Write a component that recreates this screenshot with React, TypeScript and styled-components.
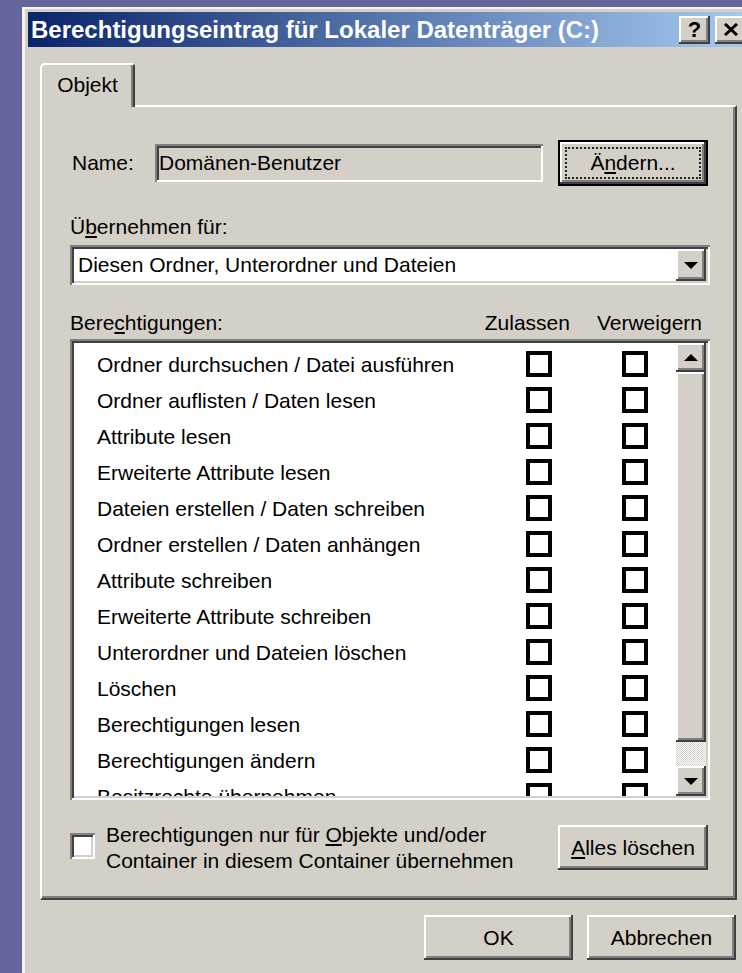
import React from "react";
import styled, { createGlobalStyle } from "styled-components";

const face = "#d4d0c8";

const raised = `
  box-shadow: inset -2px -2px #404040, inset 2px 2px #ffffff, inset -4px -4px #808080;
`;

const sunken = `
  box-shadow: inset 2px 2px #808080, inset -2px -2px #ffffff, inset 4px 4px #404040,
    inset -4px -4px ${face};
`;

const GlobalStyle = createGlobalStyle`
  html, body {
    margin: 0;
    padding: 0;
  }
  body {
    background: #66669c;
    overflow: hidden;
    font-family: "Liberation Sans", Arial, sans-serif;
    font-size: 21px;
    color: #000;
  }
`;

const Desktop = styled.div`
  width: 742px;
  height: 973px;
  overflow: hidden;
  box-sizing: border-box;
  padding: 7px 0 0 22px;
`;

const Window = styled.div`
  width: 734px;
  height: 1010px;
  box-sizing: border-box;
  background: ${face};
  border-top: 2px solid #f4f3ef;
  border-left: 3px solid #f4f3ef;
  padding: 3px 6px 0 3px;
  display: flex;
  flex-direction: column;
`;

const TitleBar = styled.div`
  height: 35px;
  display: flex;
  align-items: center;
  padding: 0 4px 0 3px;
  background: linear-gradient(to right, #0a246a, #a6caf0);
`;

const Title = styled.div`
  flex: 1;
  color: #fff;
  font-weight: bold;
  font-size: 24px;
  white-space: nowrap;
`;

const CaptionButton = styled.div`
  width: 31px;
  height: 28px;
  margin-left: 5px;
  background: ${face};
  ${raised}
  display: flex;
  align-items: center;
  justify-content: center;
  font-weight: bold;
  font-size: 22px;
  line-height: 1;
`;

const Body = styled.div`
  flex: 1;
  display: flex;
  flex-direction: column;
  padding: 16px 13px 0 12px;
`;

const Tab = styled.div`
  align-self: flex-start;
  width: 95px;
  height: 44px;
  box-sizing: border-box;
  margin-bottom: -2px;
  position: relative;
  z-index: 1;
  background: ${face};
  border-top: 2px solid #fff;
  border-left: 2px solid #fff;
  border-right: 2px solid #404040;
  border-radius: 5px 4px 0 0;
  box-shadow: inset -2px 0 #808080;
  display: flex;
  align-items: center;
  justify-content: center;
  padding-bottom: 2px;
`;

const Panel = styled.div`
  height: 795px;
  box-sizing: border-box;
  border-top: 2px solid #fff;
  border-left: 2px solid #fff;
  border-right: 2px solid #404040;
  border-bottom: 2px solid #404040;
  box-shadow: inset -2px -2px #808080;
  padding: 33px 25px 0 28px;
  display: flex;
  flex-direction: column;
`;

const NameRow = styled.div`
  height: 46px;
  display: flex;
  align-items: center;
`;

const NameLabel = styled.div`
  width: 85px;
  padding-left: 2px;
  box-sizing: border-box;
`;

const ReadOnlyField = styled.div`
  flex: 1;
  height: 38px;
  margin-right: 15px;
  background: ${face};
  ${sunken}
  display: flex;
  align-items: center;
  padding-left: 4px;
`;

const PushButton = styled.div<{ $default?: boolean; $width?: number }>`
  width: ${(p) => p.$width ?? 150}px;
  height: ${(p) => (p.$default ? 46 : 45)}px;
  box-sizing: border-box;
  background: ${face};
  border: ${(p) => (p.$default ? "2px solid #000" : "none")};
  ${raised}
  display: flex;
  align-items: center;
  justify-content: center;
  padding: ${(p) => (p.$default ? "5px" : "0")};
  white-space: nowrap;
`;

const FocusRing = styled.span`
  flex: 1;
  align-self: stretch;
  display: flex;
  align-items: center;
  justify-content: center;
  border: 2px dotted #222;
`;

const FieldLabel = styled.div`
  margin-top: 29px;
  line-height: 24px;
`;

const ComboBox = styled.div`
  height: 40px;
  margin-top: 6px;
  box-sizing: border-box;
  background: #fff;
  ${sunken}
  display: flex;
  align-items: center;
  padding: 4px;
`;

const ComboText = styled.div`
  flex: 1;
  padding-left: 4px;
`;

const ArrowButton = styled.div<{ $height?: number }>`
  width: 30px;
  height: ${(p) => p.$height ?? 32}px;
  flex-shrink: 0;
  background: ${face};
  ${raised}
  display: flex;
  align-items: center;
  justify-content: center;
`;

const ListHeader = styled.div`
  margin-top: 26px;
  height: 24px;
  line-height: 24px;
  display: flex;
  gap: 27px;
  padding-right: 8px;
`;

const HeaderLabel = styled.div`
  flex: 1;
`;

const ListBox = styled.div`
  margin-top: 4px;
  height: 461px;
  box-sizing: border-box;
  background: #fff;
  ${sunken}
  display: flex;
  padding: 4px;
`;

const Rows = styled.div`
  flex: 1;
  overflow: hidden;
  padding: 4px 28px 0 23px;
`;

const Row = styled.div`
  height: 36px;
  display: grid;
  grid-template-columns: 1fr 26px 26px;
  column-gap: 70px;
  align-items: center;
  white-space: nowrap;
`;

const Check = styled.div`
  width: 26px;
  height: 26px;
  box-sizing: border-box;
  border: 4px solid #000;
  background: #fff;
  margin-top: -2px;
`;

const ScrollBar = styled.div`
  width: 30px;
  display: flex;
  flex-direction: column;
`;

const Thumb = styled.div`
  height: 370px;
  background: ${face};
  ${raised}
`;

const Track = styled.div`
  flex: 1;
  background-color: ${face};
  background-image: repeating-conic-gradient(#ffffff 0 25%, ${face} 0 50%);
  background-size: 2px 2px;
`;

const OptionRow = styled.div`
  margin-top: 25px;
  height: 45px;
  display: flex;
  align-items: center;
`;

const SmallCheck = styled.div`
  width: 25px;
  height: 26px;
  flex-shrink: 0;
  background: #fff;
  ${sunken}
  margin: 0 11px 4px 0;
`;

const OptionText = styled.div`
  flex: 1;
  line-height: 26px;
`;

const DialogButtons = styled.div`
  margin-top: 15px;
  display: flex;
  justify-content: flex-end;
  gap: 14px;
  padding-right: 1px;
`;

const Triangle: React.FC<{ up?: boolean }> = ({ up }) => (
  <svg width="14" height="7" viewBox="0 0 14 7">
    <polygon points={up ? "7,0 14,7 0,7" : "0,0 14,0 7,7"} fill="#000" />
  </svg>
);

const permissions = [
  "Ordner durchsuchen / Datei ausführen",
  "Ordner auflisten / Daten lesen",
  "Attribute lesen",
  "Erweiterte Attribute lesen",
  "Dateien erstellen / Daten schreiben",
  "Ordner erstellen / Daten anhängen",
  "Attribute schreiben",
  "Erweiterte Attribute schreiben",
  "Unterordner und Dateien löschen",
  "Löschen",
  "Berechtigungen lesen",
  "Berechtigungen ändern",
  "Besitzrechte übernehmen",
];

const App: React.FC = () => {
  return (
    <Desktop>
      <GlobalStyle />
      <Window>
        <TitleBar>
          <Title>Berechtigungseintrag für Lokaler Datenträger (C:)</Title>
          <CaptionButton>?</CaptionButton>
          <CaptionButton>
            <svg width="14" height="13" viewBox="0 0 14 13">
              <path d="M1 1 L13 12 M13 1 L1 12" stroke="#000" strokeWidth="3" />
            </svg>
          </CaptionButton>
        </TitleBar>
        <Body>
          <Tab>Objekt</Tab>
          <Panel>
            <NameRow>
              <NameLabel>Name:</NameLabel>
              <ReadOnlyField>Domänen-Benutzer</ReadOnlyField>
              <PushButton $default style={{ marginRight: 2 }}>
                <FocusRing>
                  <span>
                    Ä<u>n</u>dern...
                  </span>
                </FocusRing>
              </PushButton>
            </NameRow>

            <FieldLabel>
              Ü<u>b</u>ernehmen für:
            </FieldLabel>
            <ComboBox>
              <ComboText>Diesen Ordner, Unterordner und Dateien</ComboText>
              <ArrowButton>
                <Triangle />
              </ArrowButton>
            </ComboBox>

            <ListHeader>
              <HeaderLabel>
                Bere<u>c</u>htigungen:
              </HeaderLabel>
              <div>Zulassen</div>
              <div>Verweigern</div>
            </ListHeader>
            <ListBox>
              <Rows>
                {permissions.map((p) => (
                  <Row key={p}>
                    <span>{p}</span>
                    <Check />
                    <Check />
                  </Row>
                ))}
              </Rows>
              <ScrollBar>
                <ArrowButton $height={29}>
                  <Triangle up />
                </ArrowButton>
                <Thumb />
                <Track />
                <ArrowButton $height={30}>
                  <Triangle />
                </ArrowButton>
              </ScrollBar>
            </ListBox>

            <OptionRow>
              <SmallCheck />
              <OptionText>
                Berechtigungen nur für <u>O</u>bjekte und/oder
                <br />
                Container in diesem Container übernehmen
              </OptionText>
              <PushButton style={{ marginRight: 2 }}>
                <span>
                  <u>A</u>lles löschen
                </span>
              </PushButton>
            </OptionRow>
          </Panel>
          <DialogButtons>
            <PushButton $width={149}>OK</PushButton>
            <PushButton $width={149}>Abbrechen</PushButton>
          </DialogButtons>
        </Body>
      </Window>
    </Desktop>
  );
};

export default App;
